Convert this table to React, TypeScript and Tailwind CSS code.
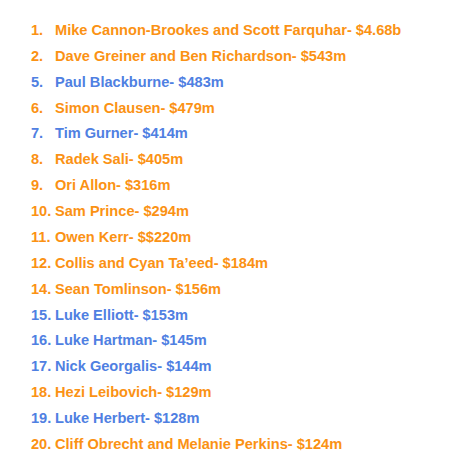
import React from 'react';

const orange = 'text-[#fb9214]';
const blue = 'text-[#4f80e2]';

const rows = [
  { n: '1.', name: 'Mike Cannon-Brookes and Scott Farquhar', worth: '$4.68b', c: orange },
  { n: '2.', name: 'Dave Greiner and Ben Richardson', worth: '$543m', c: orange },
  { n: '5.', name: 'Paul Blackburne', worth: '$483m', c: blue },
  { n: '6.', name: 'Simon Clausen', worth: '$479m', c: orange },
  { n: '7.', name: 'Tim Gurner', worth: '$414m', c: blue },
  { n: '8.', name: 'Radek Sali', worth: '$405m', c: orange },
  { n: '9.', name: 'Ori Allon', worth: '$316m', c: orange },
  { n: '10.', name: 'Sam Prince', worth: '$294m', c: orange },
  { n: '11.', name: 'Owen Kerr', worth: '$$220m', c: orange },
  { n: '12.', name: 'Collis and Cyan Ta\u2019eed', worth: '$184m', c: orange },
  { n: '14.', name: 'Sean Tomlinson', worth: '$156m', c: orange },
  { n: '15.', name: 'Luke Elliott', worth: '$153m', c: blue },
  { n: '16.', name: 'Luke Hartman', worth: '$145m', c: blue },
  { n: '17.', name: 'Nick Georgalis', worth: '$144m', c: blue },
  { n: '18.', name: 'Hezi Leibovich', worth: '$129m', c: orange },
  { n: '19.', name: 'Luke Herbert', worth: '$128m', c: blue },
  { n: '20.', name: 'Cliff Obrecht and Melanie Perkins', worth: '$124m', c: orange },
];

export default function App() {
  return (
    <div className="w-[474px] h-[468px] bg-white pt-[18px] pl-[31px] font-['Liberation_Sans',Arial,sans-serif]">
      <ul className="flex flex-col">
        {rows.map((r) => (
          <li key={r.n} className={`flex h-[25.875px] items-center text-[14.6px] font-bold whitespace-nowrap ${r.c}`}>
            <span className="w-[24px] shrink-0">{r.n}</span>
            <span>{r.name}- {r.worth}</span>
          </li>
        ))}
      </ul>
    </div>
  );
}
